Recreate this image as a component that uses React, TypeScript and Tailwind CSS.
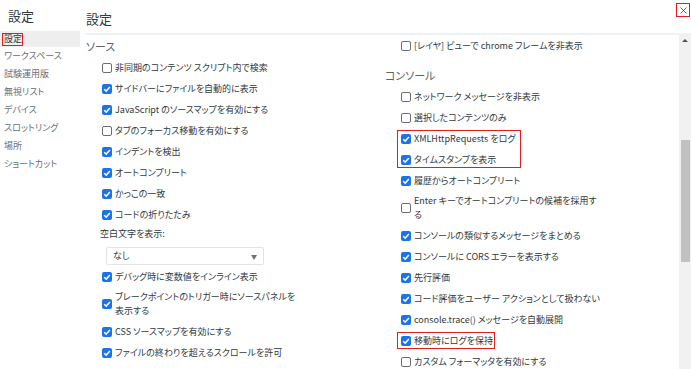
import { X } from 'lucide-react';

const jp = "font-['Noto_Sans_CJK_JP','Noto_Sans',sans-serif] [font-feature-settings:'palt']";

const sidebar = ['ワークスペース', '試験運用版', '無視リスト', 'デバイス', 'スロットリング', '場所', 'ショートカット'];

function Box({ checked }: { checked: boolean }) {
    if (!checked) {
        return <span className="w-[10px] h-[10px] shrink-0 mr-[3px] rounded-[2px] border border-[#6b6f74] bg-white" />;
    }
    return (
        <span className="w-[10px] h-[10px] shrink-0 mr-[3px] rounded-[2px] bg-[#1a73e8] flex items-center justify-center">
            <svg viewBox="0 0 10 10" className="w-[10px] h-[10px]">
                <path d="M2.2 5.2 L4.2 7.1 L7.9 2.9" fill="none" stroke="white" strokeWidth="1.5" />
            </svg>
        </span>
    );
}

function Item({ label, checked = true }: { label: string, checked?: boolean, key?: string }) {
    return (
        <div className="flex items-center h-[21px] pl-[16px] text-[9px] text-[#303942] whitespace-nowrap">
            <Box checked={checked} />
            <span>{label}</span>
        </div>
    );
}

function TwoLine({ first, second, checked = true }: { first: string, second: string, checked?: boolean }) {
    return (
        <div className="flex items-center py-[3px] pl-[16px] text-[9px] leading-[14px] text-[#303942] whitespace-nowrap">
            <Box checked={checked} />
            <span>{first}<br />{second}</span>
        </div>
    );
}

function Section({ title, className = '' }: { title: string, className?: string }) {
    return <div className={`h-[22px] flex items-center text-[11px] text-[#5f6368] ${className}`}>{title}</div>;
}

export default function App() {
    return (
        <div className={`relative w-[691px] h-[369px] overflow-hidden bg-white flex ${jp}`}>
            {/* sidebar */}
            <div className="w-[85px] shrink-0 flex flex-col">
                <div className="h-[31px] pl-[8px] flex items-center text-[13px] text-[#303942]">設定</div>
                <div className="relative h-[16px] w-[80px] bg-[#eeeeee] pl-[4px] flex items-center text-[9px] text-[#303942]">
                    設定
                    <span className="absolute left-[2px] top-[2px] w-[21px] h-[13px] border-[1.5px] border-[#e01e1e]" />
                </div>
                {sidebar.map((s) => (
                    <div key={s} className="h-[18px] pl-[4px] flex items-center text-[9px] text-[#6b6f74] whitespace-nowrap">{s}</div>
                ))}
            </div>

            {/* main */}
            <div className="flex-1 flex flex-col">
                <div className="h-[35px] shrink-0 border-b-2 border-[#edf2fa] pl-[1px] pt-[9px] text-[13px] text-[#303942] leading-[20px]">設定</div>
                <div className="flex-1 flex min-h-0">
                    <div className="w-[300px] shrink-0 pl-[1px]">
                        <Section title="ソース" />
                        <Item label="非同期のコンテンツ スクリプト内で検索" checked={false} />
                        <Item label="サイドバーにファイルを自動的に表示" />
                        <Item label="JavaScript のソースマップを有効にする" />
                        <Item label="タブのフォーカス移動を有効にする" checked={false} />
                        <Item label="インデントを検出" />
                        <Item label="オートコンプリート" />
                        <Item label="かっこの一致" />
                        <Item label="コードの折りたたみ" />
                        <div className="h-[18px] pl-[14px] flex items-center text-[9px] text-[#303942]">空白文字を表示:</div>
                        <div className="ml-[20px] mt-[4px] w-[158px] h-[18px] rounded-[2px] border border-[#e3e3e3] pl-[6px] pr-[6px] flex items-center justify-between text-[9px] text-[#303942]">
                            <span>なし</span>
                            <span className="text-[6px] text-[#6b6f74]">▼</span>
                        </div>
                        <div className="h-[1px]" />
                        <Item label="デバッグ時に変数値をインライン表示" />
                        <TwoLine first="ブレークポイントのトリガー時にソースパネルを" second="表示する" />
                        <Item label="CSS ソースマップを有効にする" />
                        <Item label="ファイルの終わりを超えるスクロールを許可" />
                    </div>
                    <div className="flex-1">
                        <Item label="[レイヤ] ビューで chrome フレームを非表示" checked={false} />
                        <Section title="コンソール" className="mt-[8px] text-[11.5px]" />
                        <Item label="ネットワーク メッセージを非表示" checked={false} />
                        <Item label="選択したコンテンツのみ" checked={false} />
                        <div className="relative">
                            <Item label="XMLHttpRequests をログ" />
                            <Item label="タイムスタンプを表示" />
                            <span className="absolute left-[12px] top-[2px] w-[124px] h-[38px] border-[1.5px] border-[#e01e1e]" />
                        </div>
                        <Item label="履歴からオートコンプリート" />
                        <TwoLine first="Enter キーでオートコンプリートの候補を採用す" second="る" checked={false} />
                        <Item label="コンソールの類似するメッセージをまとめる" />
                        <Item label="コンソールに CORS エラーを表示する" />
                        <Item label="先行評価" />
                        <Item label="コード評価をユーザー アクションとして扱わない" />
                        <Item label="console.trace() メッセージを自動展開" />
                        <div className="relative">
                            <Item label="移動時にログを保持" />
                            <span className="absolute left-[12px] top-[2px] w-[98px] h-[17px] border-[1.5px] border-[#e01e1e]" />
                        </div>
                        <Item label="カスタム フォーマッタを有効にする" checked={false} />
                    </div>
                    {/* scrollbar */}
                    <div className="w-[12px] shrink-0 bg-[#f1f1f1] flex flex-col items-center">
                        <span className="mt-[4px] w-0 h-0 border-l-[3px] border-r-[3px] border-b-[3px] border-l-transparent border-r-transparent border-b-[#505050]" />
                        <div className="mt-[98px] w-[9px] h-[122px] bg-[#c1c1c1]" />
                    </div>
                </div>
            </div>

            <div className="absolute right-[1px] top-[3px] w-[14px] h-[14px] border-[1.5px] border-[#e01e1e] flex items-center justify-center text-[#444]">
                <X size={11} strokeWidth={1.75} />
            </div>
        </div>
    );
}
